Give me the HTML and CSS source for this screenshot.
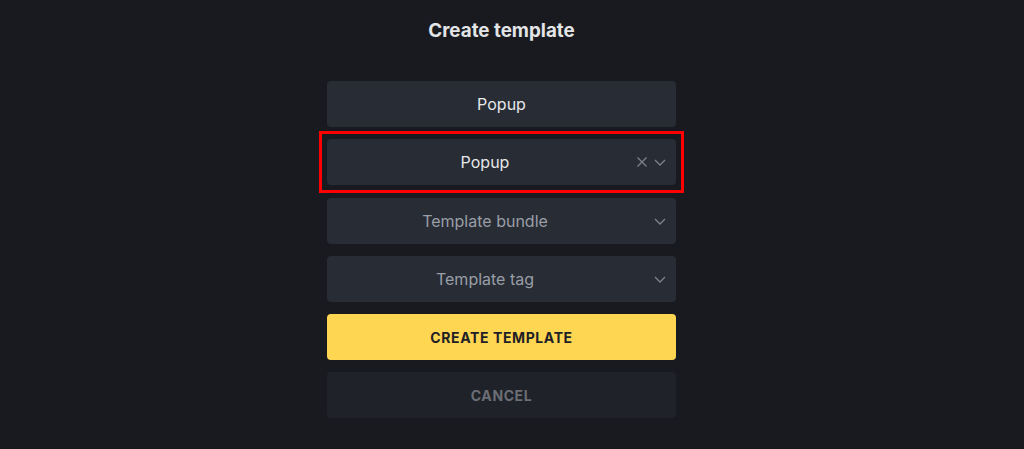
FILE: index.html
```html
<!DOCTYPE html>
<html>
<head>
<meta charset="utf-8">
<link rel="stylesheet" href="styles.css">
</head>
<body>
<div class="page">
  <div class="panel">
    <h1 class="title">Create template</h1>
    <div class="form">
      <div class="field"><span class="value">Popup</span></div>
      <div class="field select highlighted">
        <span class="value">Popup</span>
        <span class="indicators">
          <svg class="ico" width="14" height="14" viewBox="0 0 14 14"><path d="M2.5 2.5L11.5 11.5M11.5 2.5L2.5 11.5" stroke="#7d828b" stroke-width="1.3" fill="none"/></svg>
          <svg class="ico" width="14" height="14" viewBox="0 0 14 14"><path d="M2 5L7 10L12 5" stroke="#7d828b" stroke-width="1.3" fill="none"/></svg>
        </span>
      </div>
      <div class="field select after-highlight">
        <span class="value placeholder">Template bundle</span>
        <span class="indicators">
          <svg class="ico" width="14" height="14" viewBox="0 0 14 14"><path d="M2 5L7 10L12 5" stroke="#7d828b" stroke-width="1.3" fill="none"/></svg>
        </span>
      </div>
      <div class="field select">
        <span class="value placeholder">Template tag</span>
        <span class="indicators">
          <svg class="ico" width="14" height="14" viewBox="0 0 14 14"><path d="M2 5L7 10L12 5" stroke="#7d828b" stroke-width="1.3" fill="none"/></svg>
        </span>
      </div>
      <button class="btn primary">CREATE TEMPLATE</button>
      <button class="btn cancel">CANCEL</button>
    </div>
  </div>
</div>
</body>
</html>
```

FILE: styles.css
```css
html, body {
  margin: 0;
  padding: 0;
  background: #181a1f;
  font-family: Inter, "Noto Sans", sans-serif;
}
.page {
  height: 449px;
  display: flex;
  justify-content: center;
  padding-right: 21px;
}
.panel {
  width: 349px;
  display: flex;
  flex-direction: column;
  align-items: stretch;
}
.title {
  margin: 0;
  padding-top: 20px;
  height: 22px;
  line-height: 22px;
  font-size: 18.8px;
  font-weight: 700;
  color: #e3e4e6;
  text-align: center;
}
.form {
  margin-top: 39px;
  display: flex;
  flex-direction: column;
  gap: 12px;
}
.field {
  position: relative;
  height: 46px;
  border-radius: 4px;
  background: #272c35;
  display: flex;
  align-items: center;
  justify-content: center;
  font-size: 16px;
  color: #e6e7e9;
}
.field.select {
  padding-right: 33px;
}
.after-highlight {
  margin-top: 1px;
}
.placeholder {
  color: #9a9ea6;
}
.highlighted::after {
  content: "";
  position: absolute;
  left: -8px;
  right: -8px;
  top: -8px;
  bottom: -8px;
  border: 3px solid #ff0000;
  pointer-events: none;
}
.indicators {
  position: absolute;
  right: 9px;
  top: 0;
  bottom: 0;
  display: flex;
  align-items: center;
  gap: 4px;
}
.ico {
  display: block;
}
.btn {
  height: 46px;
  border: none;
  border-radius: 4px;
  font-family: Inter, "Noto Sans", sans-serif;
  font-size: 14px;
  font-weight: 700;
  letter-spacing: 0.6px;
  cursor: pointer;
}
.primary {
  background: #ffd652;
  color: #1e2026;
}
.cancel {
  background: #1f2228;
  color: #6b6e75;
}
```
